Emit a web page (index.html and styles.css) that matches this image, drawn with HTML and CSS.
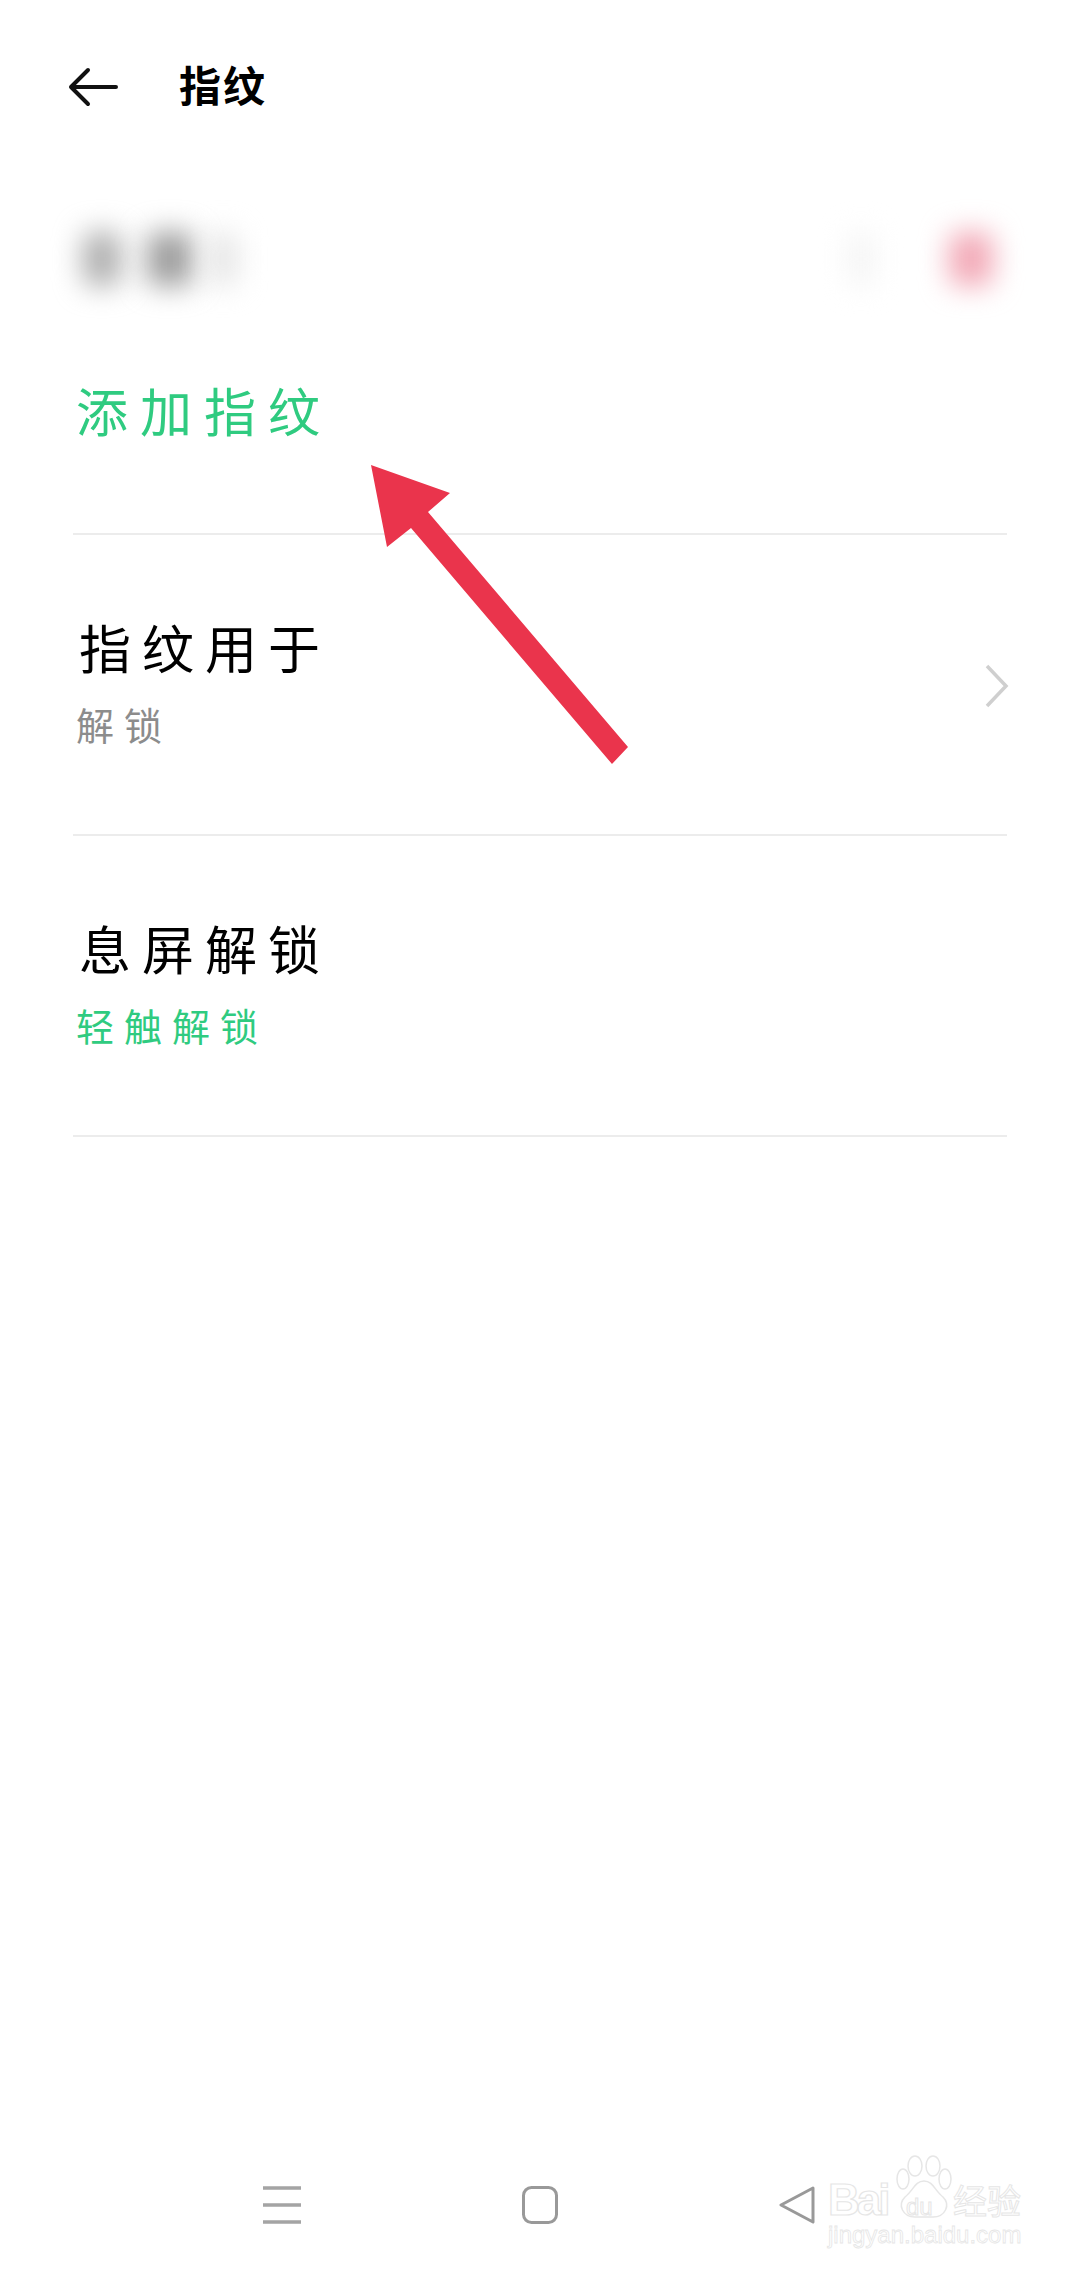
FILE: index.html
```html
<html>
    <head>
        <meta charset="UTF-8" name="viewport" content="width=device-width, initial-scale=1.0">
        <link rel="stylesheet" href="styles.css">
    </head>
    <body>
        <div class="page">
            <div class="header">
                <svg class="back" width="50" height="40" viewBox="0 0 50 40">
                    <path d="M48 20H3M20 3L3 20L20 37" fill="none" stroke="#111" stroke-width="4" stroke-linecap="round" stroke-linejoin="round"/>
                </svg>
                <span class="header-title">指纹</span>
            </div>

            <div class="blur-row">
                <div class="blur-left">
                    <span class="blob blob-a"></span>
                    <span class="blob blob-b"></span>
                    <span class="blob blob-c"></span>
                </div>
                <div class="blur-right">
                    <span class="blob blob-d"></span>
                    <span class="blob blob-e"></span>
                </div>
            </div>

            <div class="row row-add">
                <p class="row-title green">添加指纹</p>
            </div>

            <div class="row row-item">
                <div>
                    <p class="row-title">指纹用于</p>
                    <p class="row-sub">解锁</p>
                </div>
                <svg class="chevron" width="24" height="44" viewBox="0 0 24 44">
                    <path d="M2 2L21 22L2 42" fill="none" stroke="#cfcfcf" stroke-width="3.5"/>
                </svg>
            </div>

            <div class="row row-item">
                <div>
                    <p class="row-title">息屏解锁</p>
                    <p class="row-sub green">轻触解锁</p>
                </div>
            </div>

            <div class="nav">
                <svg width="38" height="38" viewBox="0 0 38 38">
                    <path d="M0 2H38M0 19H38M0 36H38" stroke="#a4a4a4" stroke-width="3.5" fill="none"/>
                </svg>
                <svg width="36" height="38" viewBox="0 0 36 38">
                    <rect x="1.5" y="1.5" width="33" height="35" rx="8" fill="none" stroke="#999" stroke-width="3"/>
                </svg>
                <svg width="36" height="38" viewBox="0 0 36 38">
                    <path d="M34 2L2 19L34 36Z" fill="none" stroke="#999" stroke-width="3" stroke-linejoin="round"/>
                </svg>
            </div>
        </div>

        <!-- red annotation arrow drawn over the screenshot -->
        <svg class="arrow" width="1080" height="800" viewBox="0 0 1080 800">
            <polygon points="371,465 450,493 428,512 628,747 612,764 411,528 387,547" fill="#ea344c"/>
        </svg>

        <div class="watermark">
            <svg class="paw" width="58" height="64" viewBox="0 0 58 64">
                <g fill="#fff" stroke="#e6e6e6" stroke-width="1.5">
                    <ellipse cx="20" cy="11" rx="7" ry="10"/>
                    <ellipse cx="38" cy="11" rx="7" ry="10"/>
                    <ellipse cx="8" cy="24" rx="6" ry="10"/>
                    <ellipse cx="50" cy="24" rx="6" ry="10"/>
                    <path d="M29 26C38 26 40 36 48 42C56 50 50 62 38 62C32 62 26 62 20 62C8 62 2 50 10 42C18 36 20 26 29 26Z"/>
                </g>
            </svg>
            <span class="wm-bai">Bai</span>
            <span class="wm-du">du</span>
            <span class="wm-cn">经验</span>
            <span class="wm-url">jingyan.baidu.com</span>
        </div>
    </body>
</html>
```
FILE: styles.css
```css
html, body {
    margin: 0;
    padding: 0;
    background: #fff;
}

body {
    font-family: "Noto Sans CJK SC", "Liberation Sans", sans-serif;
    position: relative;
    width: 1080px;
    height: 2270px;
    overflow: hidden;
}

p {
    margin: 0;
}

.page {
    display: flex;
    flex-direction: column;
    height: 2270px;
    padding: 0 73px;
    box-sizing: border-box;
}

.header {
    display: flex;
    align-items: center;
    height: 174px;
    box-sizing: border-box;
    gap: 60px;
}

.back {
    flex: none;
    margin-left: -5px;
}

.header-title {
    font-size: 42px;
    line-height: 50px;
    font-weight: 700;
    letter-spacing: 2px;
    color: #000;
    margin: -7px 0 0 1px;
}

.blur-row {
    display: flex;
    justify-content: space-between;
    align-items: center;
    height: 170px;
}

.blur-left, .blur-right {
    display: flex;
    align-items: center;
}

.blob {
    display: block;
    height: 54px;
    width: 30px;
    border-radius: 10px;
    filter: blur(14px);
}

.blob-a {
    background: #adadad;
    margin-left: 10px;
    width: 38px;
}

.blob-b {
    background: #9c9c9c;
    margin-left: 26px;
    width: 46px;
}

.blob-c {
    background: #e4e4e4;
    margin-left: 16px;
    width: 28px;
}

.blob-d {
    background: #f3f3f3;
    width: 24px;
}

.blob-e {
    background: #f2a8b6;
    margin-left: 76px;
    margin-right: 14px;
    width: 44px;
}

.row {
    display: flex;
    justify-content: space-between;
    box-sizing: border-box;
    border-bottom: 2px solid #ececec;
}

.row-add {
    height: 191px;
    padding: 31px 0 0 3px;
}

.row-add .row-title {
    letter-spacing: 12px;
}

.row-item {
    height: 301px;
    padding: 77px 0 0 6px;
}

.row-title {
    font-size: 52px;
    line-height: 70px;
    letter-spacing: 11px;
    color: #000;
}

.row-sub {
    margin-top: 17px;
    margin-left: -3px;
    font-size: 38px;
    line-height: 50px;
    letter-spacing: 10px;
    color: #8c8c8c;
}

.row-title.green, .row-sub.green {
    color: #2fcb80;
}

.chevron {
    margin: 52px -2px 0 0;
}

.nav {
    display: flex;
    align-items: center;
    gap: 221px;
    margin-top: auto;
    padding: 0 0 46px 190px;
}

.arrow {
    position: absolute;
    left: 0;
    top: 0;
}

.watermark {
    position: absolute;
    left: 828px;
    top: 2155px;
    width: 200px;
    height: 95px;
    color: #fff;
    font-family: "Liberation Sans", sans-serif;
}

.watermark span {
    position: absolute;
    white-space: nowrap;
}

.paw {
    position: absolute;
    left: 67px;
    top: 0;
}

.wm-bai {
    left: 0;
    top: 25px;
    font-size: 44px;
    line-height: 40px;
    font-weight: 700;
    letter-spacing: -3px;
    -webkit-text-stroke: 1.2px #e6e6e6;
}

.wm-du {
    left: 78px;
    top: 40px;
    font-size: 24px;
    line-height: 24px;
    -webkit-text-stroke: 1px #e6e6e6;
}

.wm-cn {
    left: 125px;
    top: 26px;
    font-family: "Noto Sans CJK SC", sans-serif;
    font-size: 34px;
    line-height: 38px;
    -webkit-text-stroke: 1px #e6e6e6;
}

.wm-url {
    left: 0;
    top: 67px;
    font-size: 24px;
    line-height: 26px;
    -webkit-text-stroke: 0.8px #e6e6e6;
}
```
